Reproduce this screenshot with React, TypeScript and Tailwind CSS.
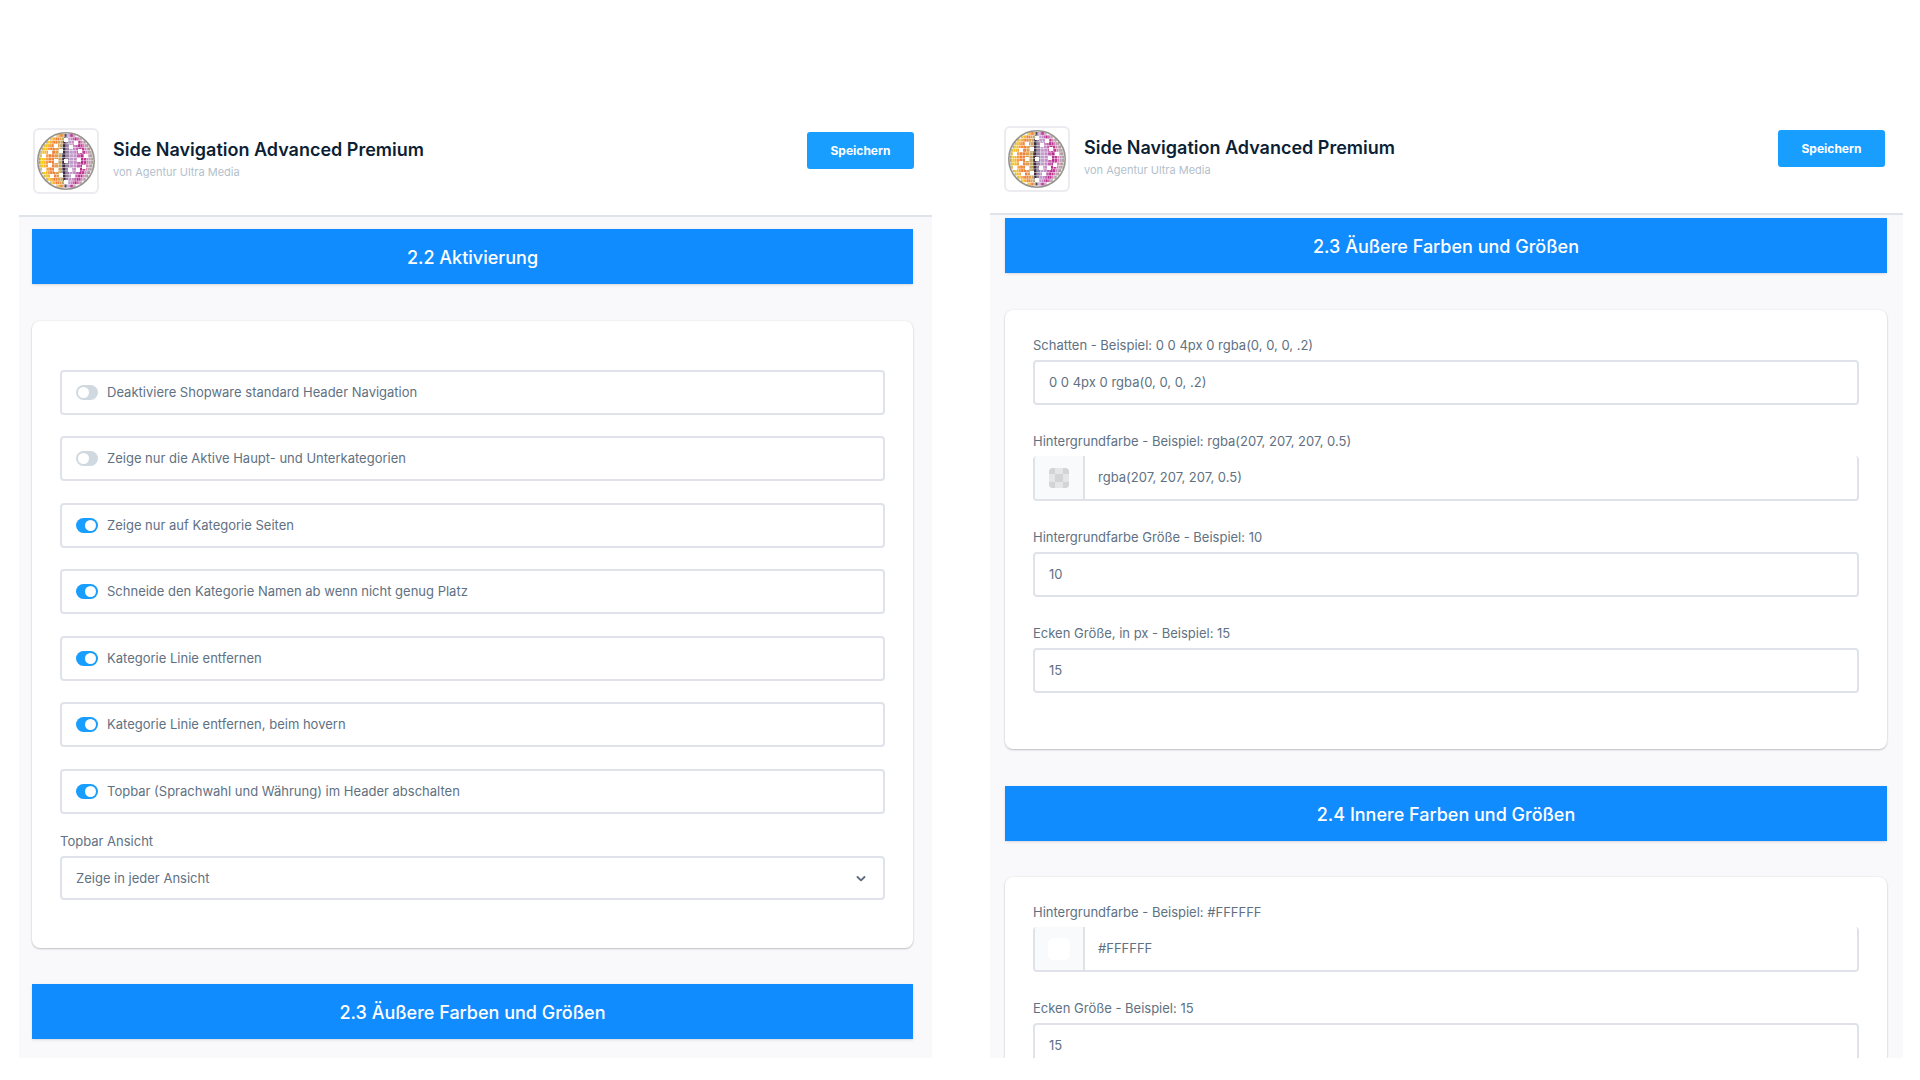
import { useId, useState } from 'react'
import type { ReactNode } from 'react'
import { clsx } from 'clsx'

// ── Data ───────────────────────────────────────────────────────────────────

const TOGGLES = [
  { label: 'Deaktiviere Shopware standard Header Navigation', on: false },
  { label: 'Zeige nur die Aktive Haupt- und Unterkategorien', on: false },
  { label: 'Zeige nur auf Kategorie Seiten', on: true },
  { label: 'Schneide den Kategorie Namen ab wenn nicht genug Platz', on: true },
  { label: 'Kategorie Linie entfernen', on: true },
  { label: 'Kategorie Linie entfernen, beim hovern', on: true },
  { label: 'Topbar (Sprachwahl und Währung) im Header abschalten', on: true },
]

// ── Mirror ball logo ───────────────────────────────────────────────────────
// Tiles follow the meridians of a sphere, one colour per meridian.

const BALL_COLUMNS = [
  '#8a7f6c', '#9a8650', '#e0b81e', '#f5cc10', '#f9b82c', '#f7a04c',
  '#f4852f', '#ee8240', '#dfa04c', '#c4a768', '#3d2c40', '#9a82a6',
  '#bd9fca', '#c78cc6', '#c060ae', '#b82d8e', '#c03a94', '#cf86b4',
  '#c49ab6', '#a58c98', '#857a68', '#857a68',
]
const BALL_ROWS = 16

// centres of the blank mirror tiles
const BLANKS = [
  [0, 0], [-5, -10], [-10, -15], [5, -14], [-5, 14], [4, 9], [-10, 0], [-10, 9],
  [-16, 4], [-14, 15], [13, -1], [12, 9], [20, -5], [7, 15], [0, 21],
  [10, -18], [0, -21], [-16, -9], [-22, -5], [14, -10], [-22, 9], [18, 6],
]

function MirrorBall() {
  const r = 27
  const n = BALL_COLUMNS.length
  const step = (2 * r) / BALL_ROWS
  const tiles: ReactNode[] = []
  for (let row = 0; row < BALL_ROWS; row++) {
    const y0 = -r + step * row
    const mid = y0 + step / 2
    const half = Math.sqrt(r * r - mid * mid)
    for (let col = 0; col < n; col++) {
      const x0 = half * Math.sin((col / n - 0.5) * Math.PI)
      const x1 = half * Math.sin(((col + 1) / n - 0.5) * Math.PI)
      const w = x1 - x0
      tiles.push(
        <rect
          key={`${row}-${col}`}
          x={x0}
          y={y0}
          width={w * 0.9}
          height={step - 0.45}
          fill={BALL_COLUMNS[col]}
        />
      )
    }
  }
  return (
    <svg viewBox="-30 -30 60 60" className="w-[60px] h-[60px]" aria-hidden="true">
      <circle r="28" fill="#fff" />
      {tiles}
      {BLANKS.map(([x, y]) => (
        <rect key={`${x},${y}`} x={x - 2} y={y - 2} width="4" height="4" fill="#fff" />
      ))}
      <circle r="28.2" fill="none" stroke="#96928f" strokeWidth="1.6" />
    </svg>
  )
}

// ── Building blocks ────────────────────────────────────────────────────────

function PanelHeader() {
  return (
    <header className="flex items-start justify-between h-[106px] pl-[14px] pr-[18px] pt-[17px] bg-white border-b-2 border-[#dfe4ea] shrink-0">
      <div className="flex items-start gap-[14px]">
        <div className="w-[66px] h-[66px] rounded-md border-2 border-[#ececf0] flex items-center justify-center">
          <MirrorBall />
        </div>
        <div className="pt-[10px]">
          <h1 className="text-lg leading-6 font-semibold text-[#0d1f35]">Side Navigation Advanced Premium</h1>
          <p className="text-[11px] leading-5 text-[#b3bfcc]">von Agentur Ultra Media</p>
        </div>
      </div>
      <button className="mt-1 h-[37px] w-[107px] rounded-[3px] bg-[#189eff] text-white text-xs font-bold">
        Speichern
      </button>
    </header>
  )
}

function Banner({ children }: { children: ReactNode }) {
  return (
    <h2 className="h-[55px] shrink-0 flex items-center justify-center pt-[2px] bg-[#118cff] text-white text-lg leading-6 font-medium shadow-sm">
      {children}
    </h2>
  )
}

function Card({ children, className }: { children: ReactNode; className?: string }) {
  return (
    <div className={clsx('shrink-0 rounded-lg bg-white px-7 shadow-[0_1px_2px_rgba(0,0,0,0.22),0_0_2px_rgba(0,0,0,0.08)]', className)}>
      {children}
    </div>
  )
}

function Toggle({ label, on }: { label: string; on: boolean }) {
  const [checked, setChecked] = useState(on)
  return (
    <label className="flex items-center gap-[9px] h-[45px] px-[14px] border-2 border-[#dfe3e9] rounded not-last:odd:mb-[21px] not-last:even:mb-[22px] text-[13px] text-[#607182]">
      <input
        type="checkbox"
        checked={checked}
        onChange={e => setChecked(e.target.checked)}
        className="appearance-none shrink-0 flex items-center w-[22px] h-[15px] px-[2px] rounded-full bg-[#d1d9e0] checked:bg-[#189eff] checked:justify-end before:block before:w-[11px] before:h-[11px] before:rounded-full before:bg-white"
      />
      {label}
    </label>
  )
}

function FieldLabel({ htmlFor, children }: { htmlFor: string; children: ReactNode }) {
  return (
    <label htmlFor={htmlFor} className="block mb-[5px] text-[13px] leading-5 text-[#607182]">
      {children}
    </label>
  )
}

function TextField({ label, value }: { label: string; value: string }) {
  const id = useId()
  return (
    <div>
      <FieldLabel htmlFor={id}>{label}</FieldLabel>
      <input
        id={id}
        type="text"
        defaultValue={value}
        className="block w-full h-[45px] px-[14px] pb-px rounded border-2 border-[#dfe3e9] bg-white text-[13px] text-[#607182] outline-none"
      />
    </div>
  )
}

function ColorField({ label, value, swatch }: { label: string; value: string; swatch: ReactNode }) {
  const id = useId()
  return (
    <div>
      <FieldLabel htmlFor={id}>{label}</FieldLabel>
      <div className="flex h-[45px] rounded border-2 border-t-0 border-[#dfe3e9] overflow-hidden">
        <button aria-label="Farbe wählen" className="flex items-center justify-center w-[50px] bg-[#f9fafc] border-r-2 border-[#dfe3e9]">
          {swatch}
        </button>
        <input
          id={id}
          type="text"
          defaultValue={value}
          className="flex-1 px-[13px] pt-px bg-white text-[13px] text-[#607182] outline-none"
        />
      </div>
    </div>
  )
}

function CheckerSwatch() {
  return (
    <svg viewBox="0 0 20 20" className="w-5 h-5 rounded" aria-hidden="true">
      <rect width="20" height="20" fill="#e4e6e8" />
      <path d="M0 0h6v6H0zM14 0h6v6h-6zM6 6h8v8H6zM0 14h6v6H0zM14 14h6v6h-6z" fill="#d2d5d7" />
    </svg>
  )
}

function SelectField({ label, options }: { label: string; options: string[] }) {
  const id = useId()
  return (
    <div>
      <FieldLabel htmlFor={id}>{label}</FieldLabel>
      <div className="relative">
        <select
          id={id}
          className="block appearance-none w-full h-[44px] px-[14px] pt-px rounded border-2 border-[#dfe3e9] bg-white text-[13px] text-[#607182] outline-none"
        >
          {options.map(o => <option key={o}>{o}</option>)}
        </select>
        <svg viewBox="0 0 10 6" className="absolute right-[19px] top-5 w-[10px] h-[6px] pointer-events-none" aria-hidden="true">
          <path d="M1.5 1L5 4.4L8.5 1" fill="none" stroke="#5b6b7b" strokeWidth="1.8" strokeLinecap="round" strokeLinejoin="round" />
        </svg>
      </div>
    </div>
  )
}

// ── Page ───────────────────────────────────────────────────────────────────

export default function App() {
  return (
    <main className="flex items-stretch gap-[58px] h-screen pl-[19px] pr-[17px] pt-[109px] pb-[22px] bg-white overflow-hidden font-['Inter',sans-serif]">
      <section className="flex-1 min-w-0 flex flex-col bg-[#f9f9fc] overflow-hidden mt-[2px]">
        <PanelHeader />
        <div className="flex flex-col pl-[13px] pr-[19px] pt-3">
          <Banner>2.2 Aktivierung</Banner>
          <Card className="mt-[37px] mb-9 pt-[49px] pb-12">
            <div className="mb-[17px]">
              {TOGGLES.map(t => <Toggle key={t.label} {...t} />)}
            </div>
            <SelectField label="Topbar Ansicht" options={['Zeige in jeder Ansicht']} />
          </Card>
          <Banner>2.3 Äußere Farben und Größen</Banner>
        </div>
      </section>

      <section className="flex-1 min-w-0 flex flex-col bg-[#f9f9fc] overflow-hidden">
        <PanelHeader />
        <div className="flex flex-col pl-[15px] pr-4 pt-[3px]">
          <Banner>2.3 Äußere Farben und Größen</Banner>
          <Card className="mt-[37px] mb-[37px] pt-[25px] pb-[56px] flex flex-col gap-[26px]">
            <TextField label="Schatten - Beispiel: 0 0 4px 0 rgba(0, 0, 0, .2)" value="0 0 4px 0 rgba(0, 0, 0, .2)" />
            <ColorField
              label="Hintergrundfarbe - Beispiel: rgba(207, 207, 207, 0.5)"
              value="rgba(207, 207, 207, 0.5)"
              swatch={<CheckerSwatch />}
            />
            <TextField label="Hintergrundfarbe Größe - Beispiel: 10" value="10" />
            <TextField label="Ecken Größe, in px - Beispiel: 15" value="15" />
          </Card>
          <Banner>2.4 Innere Farben und Größen</Banner>
          <Card className="mt-9 pt-[25px] pb-[56px] flex flex-col gap-[26px]">
            <ColorField
              label="Hintergrundfarbe - Beispiel: #FFFFFF"
              value="#FFFFFF"
              swatch={<span className="block w-[22px] h-[22px] rounded-md bg-white" />}
            />
            <TextField label="Ecken Größe - Beispiel: 15" value="15" />
          </Card>
        </div>
      </section>
    </main>
  )
}
